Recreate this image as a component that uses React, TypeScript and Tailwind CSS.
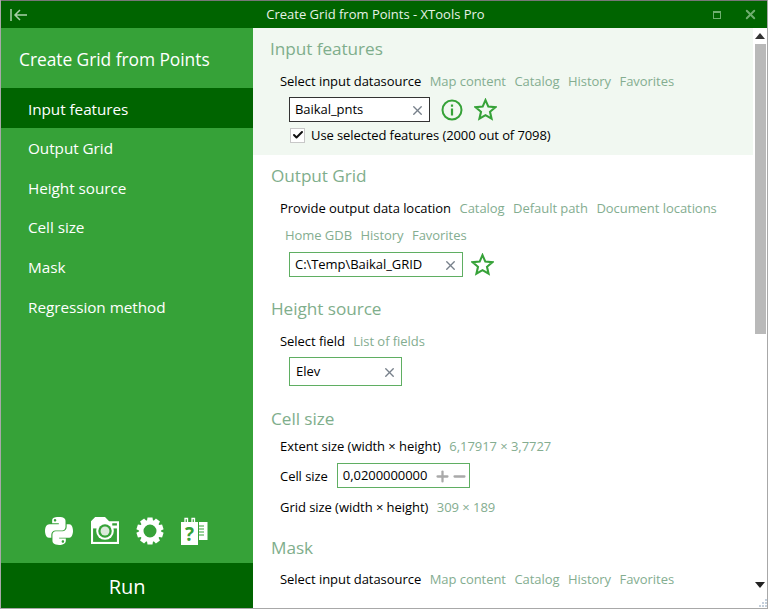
import { FaPython } from "react-icons/fa";
import { X, Plus, Minus, Check } from "lucide-react";

const FONT = "font-['Open_Sans','Noto_Sans',sans-serif]";

function Links({ items }: { items: string[] }) {
  return (
    <>
      {items.map((item) => (
        <span key={item} className="text-[#84ad90]">
          {item}
        </span>
      ))}
    </>
  );
}

function Heading({ children, className }: { children: string; className: string }) {
  return <h2 className={`text-[17.200px] leading-6 text-[#7fae8c] ${className}`}>{children}</h2>;
}

function Star() {
  return (
    <svg width="23" height="23" viewBox="0 0 22 22" fill="none" stroke="#36a238" strokeWidth="2">
      <path d="M11 2l2.700 6.200 6.700.6-5.100 4.400 1.500 6.600L11 16.400l-5.800 3.400 1.500-6.600-5.100-4.400 6.700-.6z" />
    </svg>
  );
}

function Info() {
  return (
    <svg width="22" height="22" viewBox="0 0 22 22" fill="none" stroke="#36a238">
      <circle cx="11" cy="11" r="9.500" strokeWidth="2" />
      <path d="M11 9.500v7M11 5.500v2.200" strokeWidth="2.200" />
    </svg>
  );
}

function Field({ value, width, dark }: { value: string; width: string; dark?: boolean }) {
  return (
    <div
      className={`flex h-full items-center justify-between border bg-white pl-[5px] pr-[4px] pt-[1px] text-black ${width} ${
        dark ? "border-[#333333]" : "border-[#5fae62]"
      }`}
    >
      <span>{value}</span>
      <X size={15} strokeWidth={2.200} className="text-[#77808a]" />
    </div>
  );
}

function Camera() {
  return (
    <svg width="28" height="27" viewBox="0 0 27 26">
      <path fill="white" d="M0 4l4-4h9.500l4 4H27v22H0z" />
      <rect x="2" y="11" width="23" height="13" fill="#36a238" />
      <rect x="20.500" y="6" width="4.500" height="2.200" fill="#36a238" />
      <circle cx="13.500" cy="13.500" r="8.500" fill="white" />
      <circle cx="13.500" cy="13.500" r="6.500" fill="#36a238" />
      <circle cx="13.500" cy="13.500" r="4.300" fill="#dbeadb" />
    </svg>
  );
}

function Gear() {
  const teeth = [0, 36, 72, 108, 144, 180, 216, 252, 288, 324];
  return (
    <svg width="28" height="28" viewBox="0 0 28 28" fill="none">
      {teeth.map((a) => (
        <path key={a} d="M11.500 0.500h5l.7 4.500h-6.400z" fill="white" transform={`rotate(${a} 14 14)`} />
      ))}
      <circle cx="14" cy="14" r="8.700" stroke="white" strokeWidth="4.400" />
    </svg>
  );
}

function HelpBook() {
  return (
    <svg width="27" height="28" viewBox="0 0 27 28" fill="white" className="overflow-visible">
      <rect x="0" y="5" width="17" height="23" />
      <path d="M4 5V1.500h2.500V5M11 5V1.500h2.500V5" fill="none" stroke="white" strokeWidth="1.300" />
      <rect x="18" y="5" width="8.500" height="18" />
      <path d="M18 9h5M18 12h5M18 15h5M18 18h5" stroke="#36a238" strokeWidth="1.200" />
      <text x="8.500" y="24" textAnchor="middle" fontSize="19" fontWeight="700" fill="#36a238" fontFamily="Open Sans">
        ?
      </text>
    </svg>
  );
}

export default function App() {
  const nav = ["Output Grid", "Height source", "Cell size", "Mask", "Regression method"];
  return (
    <div className={`flex h-[609px] w-[768px] flex-col overflow-hidden border border-t-0 border-[#a8a8a8] bg-white text-[13px] tracking-[-0.05px] ${FONT}`}>
      <header className="flex h-[28px] shrink-0 items-center justify-between border-t border-[#777] bg-[#006400] px-[9px]">
        <svg width="18" height="14" viewBox="0 0 18 14" fill="none" stroke="#a9cfa9" strokeWidth="1.500">
          <path d="M1 1v12M17 7H5M10 2L5 7l5 5" />
        </svg>
        <span className="ml-[10px] text-[13px] tracking-normal text-[#e6f2e6]">Create Grid from Points - XTools Pro</span>
        <div className="flex items-center gap-[22px]">
          <div className="h-[8px] w-[8px] border border-t-2 border-[#6fae6f]" />
          <X size={15} strokeWidth={3} className="text-[#6fae6f]" />
        </div>
      </header>

      <div className="flex min-h-0 flex-1">
        <aside className="flex w-[252px] shrink-0 flex-col bg-[#36a238] text-white">
          <h1 className="flex h-[60px] shrink-0 items-center pl-[18px] pt-[2px] text-[17.400px]">Create Grid from Points</h1>
          <div className="flex h-[40px] shrink-0 items-center bg-[#006400] pl-[27px] pt-[3px] text-[15.300px]">Input features</div>
          {nav.map((n) => (
            <div key={n} className="flex h-[39.700px] shrink-0 items-center pl-[27px] pt-[1px] text-[15.300px]">
              {n}
            </div>
          ))}
          <div className="mt-auto flex h-[36px] items-start gap-[17px] pl-[44px]">
            <FaPython className="-mt-[2px] mr-[1px] h-[32px] w-[28px]" />
            <Camera />
            <Gear />
            <HelpBook />
          </div>
          <div className="mt-[10px] flex h-[45px] shrink-0 items-center justify-center bg-[#006400] pt-[3px] text-[20px]">Run</div>
        </aside>

        <main className="min-w-0 flex-1 overflow-hidden text-black">
          <section className="flex h-[127px] flex-col bg-[#f1f8f1] pl-[17px] pt-[9px]">
            <Heading className="">Input features</Heading>
            <div className="mt-[11px] flex h-[18px] items-center gap-[8.500px] pl-[10px] pt-[2px]">
              <span>Select input datasource</span>
              <Links items={["Map content", "Catalog", "History", "Favorites"]} />
            </div>
            <div className="ml-[19px] mt-[7px] flex h-[25px] items-center gap-[11px]">
              <Field value="Baikal_pnts" width="w-[141px]" dark />
              <Info />
              <Star />
            </div>
            <div className="ml-[20px] mt-[5px] flex h-[16px] items-center gap-[6px]">
              <div className="flex h-[15px] w-[15px] items-center justify-center border border-[#c8c8c8] bg-white">
                <Check size={12} strokeWidth={4} className="text-[#111]" />
              </div>
              <span className="pt-[2px] tracking-[-0.1px]">Use selected features (2000 out of 7098)</span>
            </div>
          </section>

          <section className="flex flex-col pl-[18px] pt-[9px]">
            <Heading className="">Output Grid</Heading>
            <div className="mt-[11px] flex h-[18px] items-center gap-[8.500px] pl-[9px] pt-[2px]">
              <span>Provide output data location</span>
              <Links items={["Catalog", "Default path", "Document locations"]} />
            </div>
            <div className="mt-[9px] flex h-[18px] items-center gap-[8.500px] pl-[14px] pt-[2px]">
              <Links items={["Home GDB", "History", "Favorites"]} />
            </div>
            <div className="ml-[18px] mt-[8px] flex h-[25px] items-center gap-[8px]">
              <Field value="C:\Temp\Baikal_GRID" width="w-[174px]" />
              <Star />
            </div>

            <Heading className="mt-[20px]">Height source</Heading>
            <div className="mt-[11px] flex h-[18px] items-center gap-[8.500px] pl-[9px] pt-[2px]">
              <span>Select field</span>
              <Links items={["List of fields"]} />
            </div>
            <div className="ml-[18px] mt-[7px] h-[29px]">
              <Field value="Elev" width="w-[113px] pl-[6px]" />
            </div>

            <Heading className="mt-[21px]">Cell size</Heading>
            <div className="mt-[6px] flex h-[18px] items-center gap-[8.500px] pl-[9px] pt-[2px]">
              <span>Extent size (width × height)</span>
              <Links items={["6,17917 × 3,7727"]} />
            </div>
            <div className="mt-[8px] flex h-[25px] items-center gap-[9px] pl-[9px]">
              <span className="pt-[2px]">Cell size</span>
              <div className="flex h-full w-[133px] items-center justify-between border border-[#5fae62] pl-[5px] pr-[1px] pt-[1px]">
                <span>0,0200000000</span>
                <span className="flex items-center text-[#a9a9a9]">
                  <Plus size={17} strokeWidth={3.200} />
                  <Minus size={17} strokeWidth={3.200} />
                </span>
              </div>
            </div>
            <div className="mt-[10px] flex h-[18px] items-center gap-[8.500px] pl-[9px] pt-[2px]">
              <span>Grid size (width × height)</span>
              <Links items={["309 × 189"]} />
            </div>

            <Heading className="mt-[20px]">Mask</Heading>
            <div className="mt-[10px] flex h-[18px] items-center gap-[8.500px] pl-[9px] pt-[2px]">
              <span>Select input datasource</span>
              <Links items={["Map content", "Catalog", "History", "Favorites"]} />
            </div>
          </section>
        </main>

        <div className="flex w-[14px] shrink-0 flex-col items-center bg-white pt-[5px]">
          <div className="h-0 w-0 border-x-[5px] border-b-[6px] border-x-transparent border-b-[#333]" />
          <div className="mt-[5px] h-[290px] w-[11px] bg-[#b9b9b9]" />
          <div className="mb-[11px] mt-auto h-0 w-0 border-x-[5px] border-t-[6px] border-x-transparent border-t-[#222]" />
          <svg width="10" height="9" viewBox="0 0 10 9" fill="#c5d0dc" className="self-end">
            <path d="M8 0h2v2H8zM5 3h2v2H5zM8 3h2v2H8zM2 6h2v2H2zM5 6h2v2H5zM8 6h2v2H8z" />
          </svg>
        </div>
      </div>
    </div>
  );
}
